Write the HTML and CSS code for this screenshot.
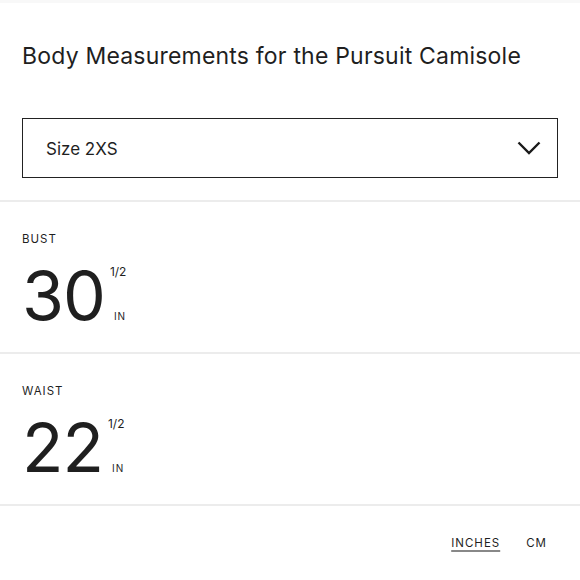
FILE: index.html
```html
<!DOCTYPE html>
<html>
<head>
<meta charset="utf-8">
<link rel="stylesheet" href="styles.css">
</head>
<body>
<div class="page">
  <div class="topline"></div>
  <h1 class="title">Body Measurements for the Pursuit Camisole</h1>
  <div class="select">
    <span class="select-label">Size 2XS</span>
    <svg class="chevron" width="24" height="14" viewBox="0 0 24 14"><path d="M1.5 1.5 L12 12 L22.5 1.5" fill="none" stroke="#1a1a1a" stroke-width="2.4"/></svg>
  </div>
  <div class="divider"></div>
  <section class="measure">
    <div class="label">BUST</div>
    <div class="value">
      <span class="num">30</span>
      <span class="side"><span class="frac">1/2</span><span class="unit">IN</span></span>
    </div>
  </section>
  <div class="divider"></div>
  <section class="measure">
    <div class="label">WAIST</div>
    <div class="value">
      <span class="num">22</span>
      <span class="side"><span class="frac">1/2</span><span class="unit">IN</span></span>
    </div>
  </section>
  <div class="divider"></div>
  <div class="units">
    <span class="unit-opt active">INCHES</span>
    <span class="unit-opt">CM</span>
  </div>
</div>
</body>
</html>
```

FILE: styles.css
```css
* { box-sizing: border-box; }
html, body { margin: 0; padding: 0; background: #fff; }
body { font-family: Inter, "Liberation Sans", sans-serif; color: #1f1f1f; }
.page { width: 580px; height: 580px; overflow: hidden; }
.topline { height: 3px; background: #f8f8f8; }
.title {
  margin: 0;
  padding: 39px 22px 0;
  font-size: 23px;
  font-weight: 400;
  line-height: 28px;
  letter-spacing: 0.2px;
  white-space: nowrap;
}
.select {
  margin: 48px 22px 0;
  height: 60px;
  border: 1.5px solid #222;
  display: flex;
  align-items: center;
  justify-content: space-between;
  padding: 0 16px 0 23px;
}
.select-label { font-size: 17px; padding-top: 1px; }
.chevron { display: block; }
.divider { height: 2px; background: #ececec; margin-top: 22px; }
.measure { height: 150px; padding: 30px 22px 0; }
.measure + .divider { margin-top: 0; }
.label { font-size: 11.5px; letter-spacing: 1px; line-height: 14px; }
.value { display: flex; align-items: stretch; margin-top: 18px; }
.num { font-size: 68px; line-height: 62px; letter-spacing: -1px; }
.side { display: flex; flex-direction: column; justify-content: space-between; margin-left: 5px; padding-top: 2px; height: 58px; }
.frac { font-size: 12px; line-height: 12px; }
.unit { font-size: 10px; letter-spacing: 1px; line-height: 12px; margin-left: 4px; }
.units { display: flex; justify-content: flex-end; gap: 26px; padding: 30px 33px 0; font-size: 11.5px; letter-spacing: 1px; }
.unit-opt.active { text-decoration: underline; text-decoration-color: #888; text-underline-offset: 3px; text-decoration-thickness: 1.5px; }
```
